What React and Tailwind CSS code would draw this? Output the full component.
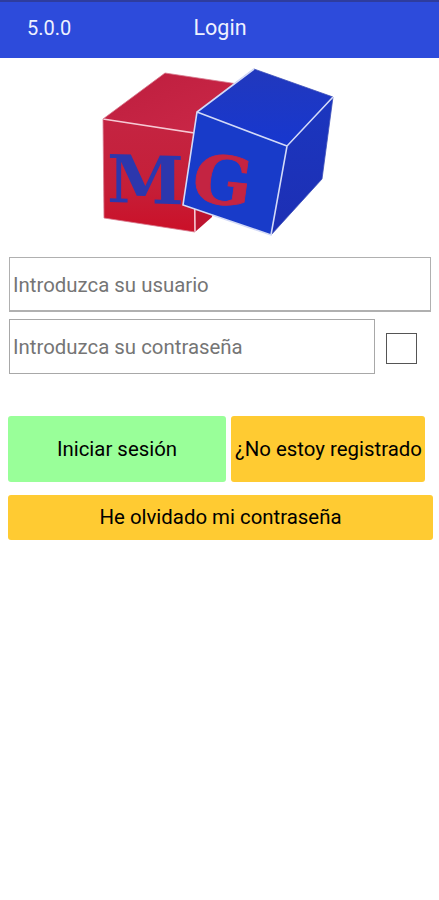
import React, { useState } from "react";

function CubesLogo() {
  return (
    <svg width="439" height="194" viewBox="0 58 439 194" className="block w-full" role="img" aria-label="MG">
      <defs>
        <linearGradient id="redFront" x1="0" y1="0" x2="0" y2="1">
          <stop offset="0" stopColor="#c42442" />
          <stop offset="0.6" stopColor="#c51f38" />
          <stop offset="1" stopColor="#cb1028" />
        </linearGradient>
        <linearGradient id="redTop" x1="0" y1="0" x2="1" y2="1">
          <stop offset="0" stopColor="#bd1e3e" />
          <stop offset="1" stopColor="#cc2848" />
        </linearGradient>
        <linearGradient id="blueTop" x1="0" y1="0" x2="0" y2="1">
          <stop offset="0" stopColor="#2138bd" />
          <stop offset="1" stopColor="#1737cf" />
        </linearGradient>
        <linearGradient id="blueSide" x1="0" y1="0" x2="0" y2="1">
          <stop offset="0" stopColor="#1b36bf" />
          <stop offset="1" stopColor="#1d2fb4" />
        </linearGradient>
      </defs>

      {/* red cube */}
      <path d="M103 119L165 73L238 84L230 138L192 133Z" fill="url(#redTop)" />
      <path d="M103 119L194 133L195 232L104 218Z" fill="url(#redFront)" />
      <path d="M194 133L225 110L212 217L195 232Z" fill="#bd142f" />
      <path d="M103 119L194 133L195 232" fill="none" stroke="#f6c9d4" strokeWidth="1.6" />
      <path d="M195 232L104 218L103 119L165 73L238 84" fill="none" stroke="#d77a8e" strokeWidth="0.8" />
      <text
        transform="matrix(1 0.03 0 1 107 202)"
        textLength="77"
        lengthAdjust="spacingAndGlyphs"
        className="font-['DejaVu_Serif',serif] text-[66px] font-bold"
        fill="#2c37ad"
      >
        M
      </text>

      {/* blue cube */}
      <path d="M197 112L254 69L333 97L287 146Z" fill="url(#blueTop)" />
      <path d="M197 112L287 146L271 235L183 205Z" fill="#183bc9" />
      <path d="M287 146L333 97L322 179L271 235Z" fill="url(#blueSide)" />
      <path d="M197 112L254 69L333 97L322 179L271 235" fill="none" stroke="#3c4fb8" strokeWidth="0.8" />
      <path d="M254 69L197 112L183 205L271 235L287 146L333 97M197 112L287 146" fill="none" stroke="#d3daf7" strokeWidth="1.6" />
      <text
        transform="matrix(1 0.1 -0.14 1 190 201)"
        textLength="59"
        lengthAdjust="spacingAndGlyphs"
        className="font-['DejaVu_Serif',serif] text-[66px] font-bold"
        fill="#c42442"
        stroke="#c42442"
        strokeWidth="0.8"
      >
        G
      </text>
    </svg>
  );
}

export default function App() {
  const [user, setUser] = useState("");
  const [password, setPassword] = useState("");
  const [showPassword, setShowPassword] = useState(false);

  return (
    <div className="min-h-screen bg-white font-[Roboto,sans-serif] text-black">
      <header className="grid h-[58px] grid-cols-3 items-center border-t-2 border-[#2e3c9e] bg-[#2d4bdb] pb-[3px] text-[#eef1ff]">
        <span className="pb-[2px] pl-[27px] text-[20px]">5.0.0</span>
        <h1 className="pl-px text-center text-[21.5px]">Login</h1>
      </header>

      <CubesLogo />

      <form onSubmit={(e) => e.preventDefault()}>
        <div className="pt-[5px] pr-2 pl-[9px]">
          <input
            value={user}
            onChange={(e) => setUser(e.target.value)}
            placeholder="Introduzca su usuario"
            className="block h-[55px] w-full border border-b-2 border-[#b0b0b0] px-[3px] pt-px text-[20.4px] placeholder:text-[#757575]"
          />
          <div className="mt-[7px] flex items-center gap-[11px]">
            <input
              type={showPassword ? "text" : "password"}
              value={password}
              onChange={(e) => setPassword(e.target.value)}
              placeholder="Introduzca su contraseña"
              className="block h-[55px] w-[366px] border border-[#a8a8a8] px-[3px] text-[20.4px] placeholder:text-[#757575]"
            />
            <input
              type="checkbox"
              checked={showPassword}
              onChange={() => setShowPassword(!showPassword)}
              className="mt-1 size-[31px] appearance-none border-[1.5px] border-[#555555] checked:bg-[#2d4bdb]"
            />
          </div>
        </div>

        <div className="mt-[42px] flex gap-[5px] pl-2">
          <button type="submit" className="h-[66px] w-[218px] rounded-[3px] bg-[#99ff99] text-[20.4px]">
            Iniciar sesión
          </button>
          <button type="button" className="h-[66px] w-[194px] rounded-[3px] bg-[#ffcb32] pl-px text-[20.4px] whitespace-nowrap">
            ¿No estoy registrado
          </button>
        </div>
        <div className="mt-[13px] pr-[6px] pl-2">
          <button type="button" className="block h-[45px] w-full rounded-[3px] bg-[#ffcb32] text-[20.4px]">
            He olvidado mi contraseña
          </button>
        </div>
      </form>
    </div>
  );
}
